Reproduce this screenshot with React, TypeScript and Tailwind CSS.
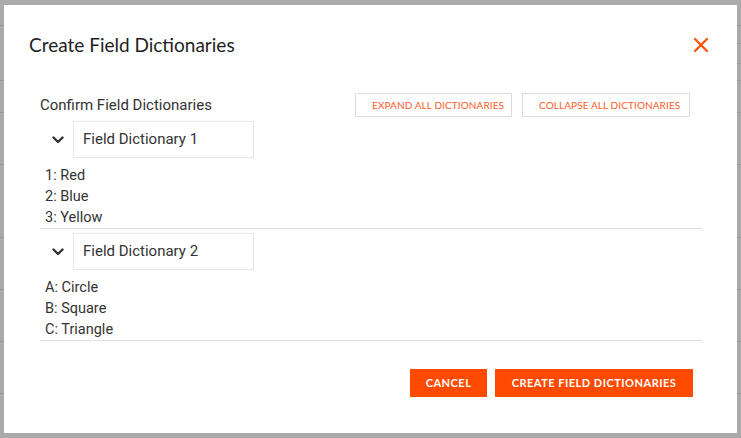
import React from "react";

const bgLinesLeft = [25, 80, 112, 164, 237, 289, 341, 393];
const bgLinesRight = [25, 43, 63, 80, 112, 164, 237, 289, 341, 393];

function Chevron() {
  return (
    <svg width="12" height="8" viewBox="0 0 12 8" className="shrink-0">
      <path d="M1.5 1.5 L6 6 L10.5 1.5" fill="none" stroke="#333" strokeWidth="2.4" strokeLinecap="round" strokeLinejoin="round" />
    </svg>
  );
}

function Section({ title, items }: { title: string; items: string[] }) {
  return (
    <div className="border-b border-[#dedede]">
      <div className="mt-[4px] flex items-center pl-[12px]">
        <Chevron />
        <div className="ml-[9px] flex h-[37px] w-[181px] items-center border border-[#e8e8e8] pl-[9px] text-[15px] text-[#333]">
          {title}
        </div>
      </div>
      <div className="mt-[7px] pl-[5px] text-[14.5px] leading-[21px] text-[#333]">
        {items.map((it) => (
          <div key={it}>{it}</div>
        ))}
      </div>
    </div>
  );
}

export default function App() {
  return (
    <div className="relative h-[438px] w-[741px] overflow-hidden bg-[#aaaaaa]" style={{ fontFamily: "Roboto, sans-serif" }}>
      {bgLinesLeft.map((y) => (
        <div key={"l" + y} className="absolute left-0 h-px w-[4px] bg-[#999999]" style={{ top: y }} />
      ))}
      {bgLinesRight.map((y) => (
        <div key={"r" + y} className="absolute right-0 h-px w-[4px] bg-[#999999]" style={{ top: y }} />
      ))}

      <div className="absolute left-[4px] top-[5px] flex h-[428px] w-[733px] flex-col bg-white">
        <div className="mt-[20px] flex h-[40px] items-center justify-between pl-[25px] pr-[29px]">
          <div className="text-[19px] text-[#1e1e24]" style={{ fontFamily: "Lato, sans-serif" }}>
            Create Field Dictionaries
          </div>
          <svg width="14" height="14" viewBox="0 0 14 14">
            <path d="M1 1 L13 13 M13 1 L1 13" stroke="#ff5000" strokeWidth="2.2" strokeLinecap="square" />
          </svg>
        </div>

        <div className="pl-[36px] pr-[35px]">
          <div className="mt-[28px] flex items-center justify-between pr-[12px]">
            <div className="text-[15px] text-[#333]">Confirm Field Dictionaries</div>
            <div className="flex gap-[10px]" style={{ fontFamily: "Lato, sans-serif" }}>
              <button className="flex h-[24px] w-[157px] items-center whitespace-nowrap border border-[#dddddd] bg-white pl-[16px] text-[10px] tracking-[0.1px] text-[#ff5a1e]">
                EXPAND ALL DICTIONARIES
              </button>
              <button className="flex h-[24px] w-[168px] items-center whitespace-nowrap border border-[#dddddd] bg-white pl-[16px] text-[10px] tracking-[0.1px] text-[#ff5a1e]">
                COLLAPSE ALL DICTIONARIES
              </button>
            </div>
          </div>

          <Section title="Field Dictionary 1" items={["1: Red", "2: Blue", "3: Yellow"]} />
          <Section title="Field Dictionary 2" items={["A: Circle", "B: Square", "C: Triangle"]} />

          <div className="mt-[28px] flex justify-end gap-[8px] pr-[9px]" style={{ fontFamily: "Lato, sans-serif" }}>
            <button className="flex h-[28px] w-[77px] items-center justify-center whitespace-nowrap bg-[#ff4a00] text-[11px] font-bold tracking-[0.5px] text-white">
              CANCEL
            </button>
            <button className="flex h-[28px] w-[198px] items-center justify-center whitespace-nowrap bg-[#ff4a00] text-[11px] font-bold tracking-[0.5px] text-white">
              CREATE FIELD DICTIONARIES
            </button>
          </div>
        </div>
      </div>
    </div>
  );
}
